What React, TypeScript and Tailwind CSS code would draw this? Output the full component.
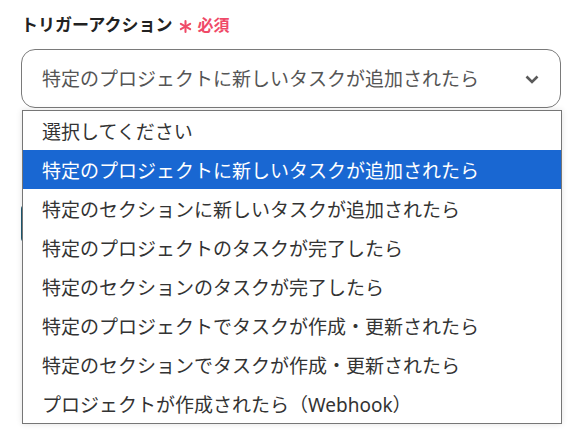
import React, { useState } from "react";

const options = [
  "選択してください",
  "特定のプロジェクトに新しいタスクが追加されたら",
  "特定のセクションに新しいタスクが追加されたら",
  "特定のプロジェクトのタスクが完了したら",
  "特定のセクションのタスクが完了したら",
  "特定のプロジェクトでタスクが作成・更新されたら",
  "特定のセクションでタスクが作成・更新されたら",
  "プロジェクトが作成されたら（Webhook）",
];

const App = () => {
  const [selected] = useState(1);
  return (
    <div
      className="relative h-[434px] w-[588px] overflow-hidden bg-white px-[21px] pt-[13px]"
      style={{ fontFamily: '"Noto Sans", "Noto Sans CJK JP", sans-serif' }}
    >
      <div className="flex h-[24px] items-center">
        <span className="text-[17px] font-bold leading-[24px] text-[#222]">トリガーアクション</span>
        <svg width="13" height="13" viewBox="0 0 12 12" className="ml-[7px] mt-[2px]">
          <g stroke="#ef4a68" strokeWidth="1.9" strokeLinecap="round">
            <path d="M6 1 V11" />
            <path d="M1.7 3.5 L10.3 8.5" />
            <path d="M10.3 3.5 L1.7 8.5" />
          </g>
        </svg>
        <span className="ml-[5px] text-[16px] font-bold leading-[24px] text-[#ef4a68]">必須</span>
      </div>

      <div className="relative mt-[12px]">
        <div className="flex h-[59px] w-[540px] items-center justify-between rounded-[14px] border border-[#7a7a7a] pl-[20px] pr-[20px]">
          <span className="pt-[2px] text-[19px] leading-none text-[#555]">{options[selected]}</span>
          <svg width="16" height="12" viewBox="0 0 16 12">
            <path d="M2.5 3.5 L8 9 L13.5 3.5" fill="none" stroke="#5a5a5a" strokeWidth="2.6" />
          </svg>
        </div>

        <button className="mt-[97px] h-[37px] w-[220px] rounded-[4px] bg-[#1d5a72]" />

        <div className="absolute left-[1px] top-[61px] w-[540px] border border-[#767676] bg-white shadow-[0_0_6px_rgba(0,0,0,0.12)]">
          {options.map((o, i) => (
            <div
              key={o}
              className={
                i === selected
                  ? "flex h-[39px] items-center bg-[#1967d2] pl-[19px] pt-[3px] text-[19px] text-white"
                  : "flex h-[39px] items-center pl-[19px] pt-[3px] text-[19px] text-[#333]"
              }
            >
              {o}
            </div>
          ))}
        </div>
      </div>
    </div>
  );
};

export default App;
